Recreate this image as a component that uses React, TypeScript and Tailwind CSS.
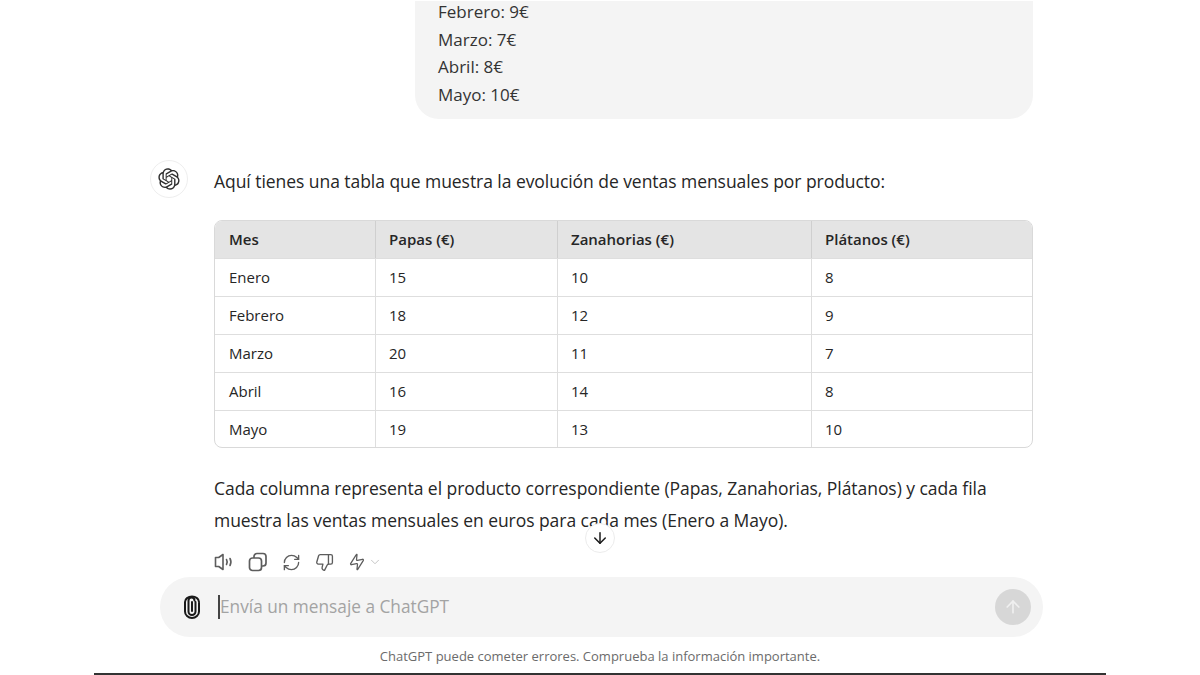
import { ArrowDown, ArrowUp, ChevronDown, RefreshCw, ThumbsDown, Zap } from 'lucide-react';

const rows = [
  ['Enero', '15', '10', '8'],
  ['Febrero', '18', '12', '9'],
  ['Marzo', '20', '11', '7'],
  ['Abril', '16', '14', '8'],
  ['Mayo', '19', '13', '10'],
];

const font = { fontFamily: '"Open Sans", "Noto Sans", sans-serif' };

function OpenAILogo() {
  return (
    <svg viewBox="0 0 41 41" className="h-[22px] w-[22px]" fill="#2f2f2f">
      <path d="M37.5324 16.8707C37.9808 15.5241 38.1363 14.0974 37.9886 12.6859C37.8409 11.2744 37.3934 9.91076 36.676 8.68622C35.6126 6.83404 33.9882 5.3676 32.0373 4.4985C30.0864 3.62941 27.9098 3.40259 25.8215 3.85078C24.8796 2.7893 23.7219 1.94125 22.4257 1.36341C21.1295 0.785575 19.7249 0.491269 18.3058 0.500197C16.1708 0.495044 14.0893 1.16803 12.3614 2.42214C10.6335 3.67624 9.34853 5.44666 8.6917 7.47815C7.30085 7.76286 5.98686 8.3414 4.8377 9.17505C3.68854 10.0087 2.73073 11.0782 2.02839 12.312C0.956464 14.1591 0.498905 16.2988 0.721698 18.4228C0.944492 20.5467 1.83612 22.5449 3.268 24.1293C2.81966 25.4759 2.66413 26.9026 2.81182 28.3141C2.95951 29.7256 3.40701 31.0892 4.12437 32.3138C5.18791 34.1659 6.8123 35.6322 8.76321 36.5013C10.7141 37.3704 12.8907 37.5973 14.9789 37.1492C15.9208 38.2107 17.0786 39.0587 18.3747 39.6366C19.6709 40.2144 21.0755 40.5087 22.4946 40.4998C24.6307 40.5054 26.7133 39.8321 28.4418 38.5772C30.1704 37.3223 31.4556 35.5506 32.1119 33.5179C33.5027 33.2332 34.8167 32.6547 35.9659 31.821C37.115 30.9874 38.0728 29.9178 38.7752 28.684C39.8458 26.8371 40.3023 24.6979 40.0789 22.5748C39.8556 20.4517 38.9639 18.4544 37.5324 16.8707ZM22.4978 37.8849C20.7443 37.8874 19.0459 37.2733 17.6994 36.1501C17.7601 36.117 17.8666 36.0586 17.936 36.0161L25.9004 31.4156C26.1003 31.3019 26.2663 31.137 26.3813 30.9378C26.4964 30.7386 26.5563 30.5124 26.5549 30.2825V19.0542L29.9213 20.998C29.9389 21.0068 29.9541 21.0198 29.9656 21.0359C29.977 21.052 29.9842 21.0707 29.9867 21.0902V30.3889C29.9842 32.375 29.1946 34.2791 27.7909 35.6841C26.3872 37.0892 24.4838 37.8806 22.4978 37.8849ZM6.39227 31.0064C5.51397 29.4888 5.19742 27.7107 5.49804 25.9832C5.55718 26.0187 5.66048 26.0818 5.73461 26.1244L13.699 30.7248C13.8975 30.8408 14.1233 30.902 14.3532 30.902C14.583 30.902 14.8088 30.8408 15.0073 30.7248L24.731 25.1103V28.9979C24.7321 29.0177 24.7283 29.0376 24.7199 29.0556C24.7115 29.0736 24.6988 29.0893 24.6829 29.1012L16.6317 33.7497C14.9096 34.7416 12.8643 35.0097 10.9447 34.4954C9.02506 33.9811 7.38785 32.7263 6.39227 31.0064ZM4.29707 13.6194C5.17156 12.0998 6.55279 10.9364 8.19885 10.3327C8.19885 10.4013 8.19491 10.5228 8.19491 10.6071V19.808C8.19351 20.0378 8.25334 20.2638 8.36823 20.4629C8.48312 20.6619 8.64893 20.8267 8.84863 20.9404L18.5723 26.5542L15.206 28.4979C15.1894 28.5089 15.1703 28.5155 15.1505 28.5173C15.1307 28.5191 15.1107 28.516 15.0924 28.5082L7.04046 23.8557C5.32135 22.8601 4.06716 21.2235 3.55289 19.3046C3.03862 17.3858 3.30624 15.3413 4.29707 13.6194ZM31.955 20.0556L22.2312 14.4411L25.5976 12.4981C25.6142 12.4872 25.6333 12.4805 25.6531 12.4787C25.6729 12.4769 25.6928 12.4801 25.7111 12.4879L33.7631 17.1364C34.9967 17.849 36.0017 18.8982 36.6606 20.1613C37.3194 21.4244 37.6047 22.849 37.4832 24.2684C37.3617 25.6878 36.8382 27.0432 35.9743 28.1759C35.1103 29.3086 33.9415 30.1717 32.6047 30.6641C32.6047 30.5947 32.6047 30.4733 32.6047 30.3889V21.188C32.6066 20.9586 32.5474 20.7328 32.4332 20.5338C32.319 20.3348 32.1537 20.1698 31.955 20.0556ZM35.3055 15.0128C35.2464 14.9765 35.1431 14.9142 35.069 14.8717L27.1045 10.2712C26.906 10.1554 26.6803 10.0943 26.4504 10.0943C26.2206 10.0943 25.9948 10.1554 25.7963 10.2712L16.0726 15.8858V11.9982C16.0715 11.9783 16.0753 11.9585 16.0837 11.9405C16.0921 11.9225 16.1048 11.9068 16.1207 11.8949L24.1719 7.25025C25.4053 6.53903 26.8158 6.19376 28.2383 6.25482C29.6608 6.31589 31.0364 6.78077 32.2044 7.59508C33.3723 8.40939 34.2842 9.53945 34.8334 10.8531C35.3826 12.1667 35.5464 13.6095 35.3055 15.0128ZM14.2424 21.9419L10.8752 19.9981C10.8576 19.9893 10.8423 19.9763 10.8309 19.9602C10.8195 19.9441 10.8122 19.9254 10.8098 19.9058V10.6071C10.8107 9.18295 11.2173 7.78848 11.9819 6.58696C12.7466 5.38544 13.8377 4.42659 15.1275 3.82264C16.4173 3.21869 17.8524 2.99464 19.2649 3.1767C20.6775 3.35876 22.0089 3.93941 23.1034 4.85067C23.0427 4.88379 22.937 4.94215 22.8668 4.98473L14.9024 9.58517C14.7025 9.69878 14.5366 9.86356 14.4215 10.0626C14.3065 10.2616 14.2466 10.4877 14.2479 10.7175L14.2424 21.9419ZM16.071 17.9991L20.4018 15.4978L24.7325 17.9975V22.9985L20.4018 25.4983L16.071 22.9985V17.9991Z" />
    </svg>
  );
}

function SpeakerIcon() {
  return (
    <svg viewBox="0 0 20 20" className="h-5 w-5" fill="none" stroke="#5d5d5d" strokeWidth="1.6" strokeLinecap="round" strokeLinejoin="round">
      <path d="M1.5 5.5h3.2L9 2.5v15l-4.3-3H1.5z" />
      <path d="M12.5 7.5c.8 1.5.8 3.5 0 5" />
      <path d="M16 6.5c1.2 2.2 1.2 4.8 0 7" />
    </svg>
  );
}

function CopyIcon() {
  return (
    <svg viewBox="0 0 20 20" className="h-5 w-5" fill="none" stroke="#5d5d5d" strokeWidth="1.7" strokeLinejoin="round">
      <rect x="1.5" y="6" width="12" height="12.5" rx="3" />
      <path d="M6 6V4.5a3 3 0 0 1 3-3h6a3 3 0 0 1 3 3V11a3 3 0 0 1-3 3h-1.5" />
    </svg>
  );
}

function PaperclipIcon() {
  return (
    <svg viewBox="0 0 18 24" className="h-6 w-[18px]" fill="none" stroke="#1a1a1a" strokeWidth="2" strokeLinecap="round">
      <path d="M12.5 7v9.5a3.5 3.5 0 0 1-7 0V5.5a3 3 0 0 1 6 0" />
      <path d="M16 8v8.5a7 6.5 0 0 1-14 0V7a7 5.5 0 0 1 14 0" />
      <path d="M9 7v9" />
    </svg>
  );
}

export default function App() {
  return (
    <div className="h-[675px] w-[1200px] overflow-hidden bg-white text-[#262626]" style={font}>
      <div className="relative mx-auto flex h-[675px] w-[1012px] flex-col border-b-2 border-[#333]">
        <div className="flex-1 pt-px">
          {/* user bubble */}
          <div className="ml-[321px] flow-root h-[118px] w-[618px] rounded-b-[24px] bg-[#f4f4f4] pl-[23px] text-[17px] leading-[27.5px] text-[#333]">
            <p className="-mt-[3px]">Febrero: 9€</p>
            <p>Marzo: 7€</p>
            <p>Abril: 8€</p>
            <p>Mayo: 10€</p>
          </div>

          {/* respuesta */}
          <div className="mt-[41px] flex pl-[56px]">
            <div className="flex h-[38px] w-[38px] items-center justify-center rounded-full border border-[#eeeeee]">
              <OpenAILogo />
            </div>
            <div className="ml-[26px] w-[819px]">
              <p className="pt-[5px] text-[17.5px] leading-[32px] tracking-[-0.05px]">
                Aquí tienes una tabla que muestra la evolución de ventas mensuales por producto:
              </p>
              <div className="mt-[23px] overflow-hidden rounded-lg border border-[#d9d9d9] text-[15px]">
                <div className="grid h-[37px] grid-cols-[160px_182px_254px_1fr] items-center bg-[#e4e4e4] font-semibold">
                  {['Mes', 'Papas (€)', 'Zanahorias (€)', 'Plátanos (€)'].map((h, i) => (
                    <div key={h} className={`flex h-full items-center ${i > 0 ? 'border-l border-[#cfcfcf] pl-[13px]' : 'pl-[14px]'}`}>
                      {h}
                    </div>
                  ))}
                </div>
                {rows.map((row, r) => (
                  <div
                    key={row[0]}
                    className={`grid grid-cols-[160px_182px_254px_1fr] border-t border-[#dedede] ${r === rows.length - 1 ? 'h-[37px]' : 'h-[38px]'}`}
                  >
                    {row.map((c, i) => (
                      <div key={i} className={`flex items-center ${i > 0 ? 'border-l border-[#dedede] pl-[13px]' : 'pl-[14px]'}`}>
                        {c}
                      </div>
                    ))}
                  </div>
                ))}
              </div>
              <p className="mt-[24px] text-[17.5px] leading-[32px] tracking-[-0.05px]">
                Cada columna representa el producto correspondiente (Papas, Zanahorias, Plátanos) y cada fila muestra las
                ventas mensuales en euros para cada mes (Enero a Mayo).
              </p>
              <div className="mt-[16px] flex h-5 items-center gap-[14px] text-[#5d5d5d]">
                <SpeakerIcon />
                <CopyIcon />
                <RefreshCw size={19} strokeWidth={1.7} />
                <ThumbsDown size={19} strokeWidth={1.7} />
                <div className="flex items-center gap-[2px]">
                  <Zap size={18} strokeWidth={1.7} className="-rotate-12" />
                  <ChevronDown size={14} strokeWidth={1.5} className="text-[#bdbdbd]" />
                </div>
              </div>
            </div>
          </div>
        </div>

        {/* boton bajar, encima del texto */}
        <div className="absolute left-[491px] top-[523px] flex h-[30px] w-[30px] items-center justify-center rounded-full border border-[#ececec] bg-white">
          <ArrowDown size={18} strokeWidth={2} className="text-[#1a1a1a]" />
        </div>

        {/* input */}
        <div className="ml-[66px] flex h-[60px] w-[883px] items-center rounded-full bg-[#f4f4f4] pl-[23px] pr-[12px]">
          <PaperclipIcon />
          <div className="ml-[17px] h-[24px] w-[2px] bg-[#444]" />
          <span className="flex-1 text-[17.25px] text-[#a3a3a3]">Envía un mensaje a ChatGPT</span>
          <div className="flex h-9 w-9 items-center justify-center rounded-full bg-[#d7d7d7]">
            <ArrowUp size={20} strokeWidth={2} className="text-[#f0f0f0]" />
          </div>
        </div>
        <p className="mb-[9px] mt-[11px] text-center text-[13px] leading-[16px] text-[#6b6b6b]">
          ChatGPT puede cometer errores. Comprueba la información importante.
        </p>
      </div>
    </div>
  );
}
